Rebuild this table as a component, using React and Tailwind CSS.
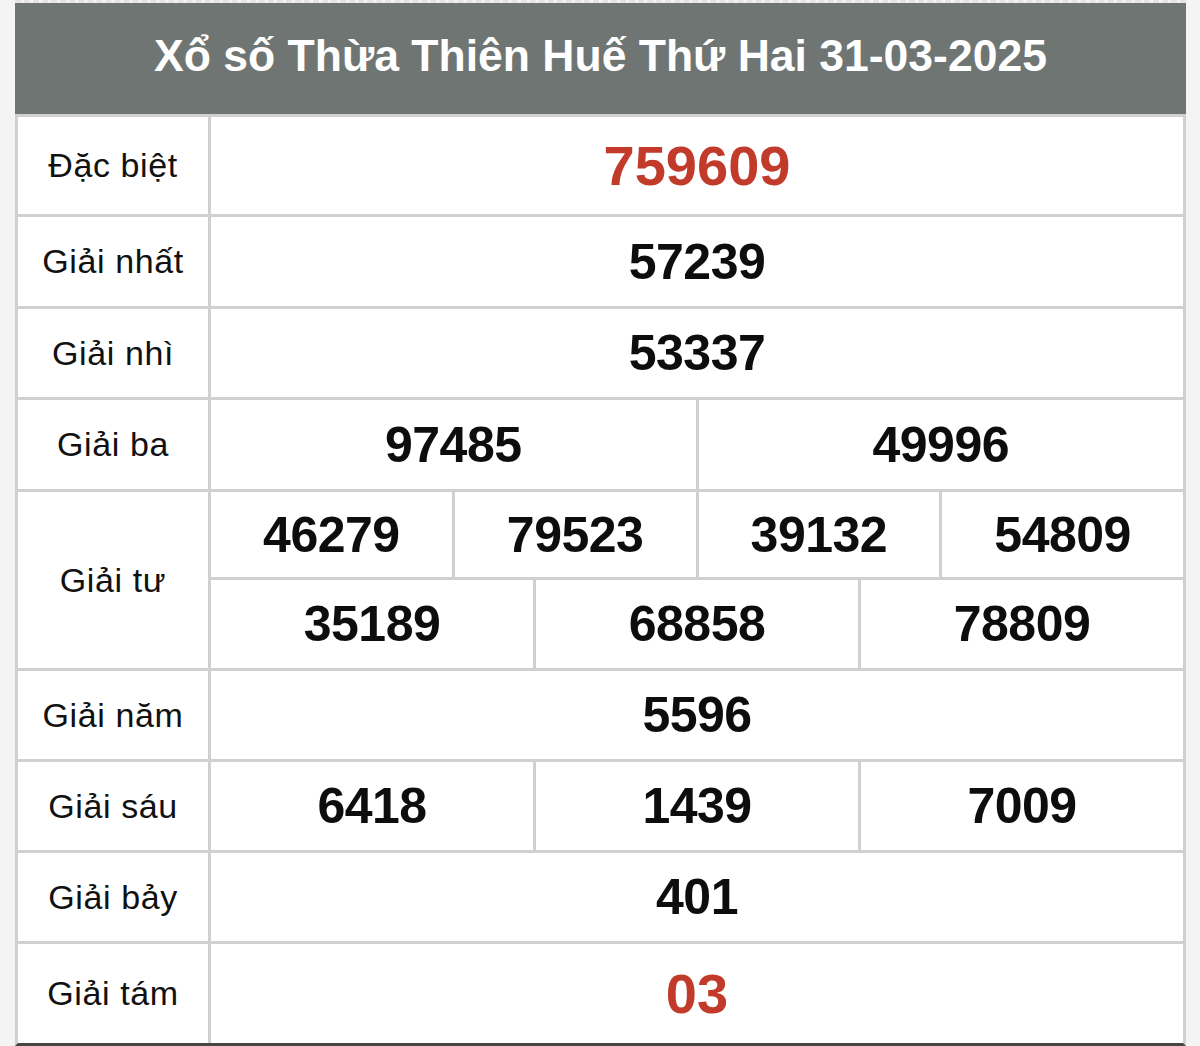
import React from 'react';

const font = { fontFamily: '"Liberation Sans", Arial, sans-serif' };

const rows = [
    { label: 'Đặc biệt', h: 'h-[97px]', lines: [['759609']], red: true },
    { label: 'Giải nhất', h: 'h-[89px]', lines: [['57239']] },
    { label: 'Giải nhì', h: 'h-[88px]', lines: [['53337']] },
    { label: 'Giải ba', h: 'h-[89px]', lines: [['97485', '49996']] },
    { label: 'Giải tư', h: 'h-[88px]', lines: [['46279', '79523', '39132', '54809'], ['35189', '68858', '78809']] },
    { label: 'Giải năm', h: 'h-[88px]', lines: [['5596']] },
    { label: 'Giải sáu', h: 'h-[88px]', lines: [['6418', '1439', '7009']] },
    { label: 'Giải bảy', h: 'h-[88px]', lines: [['401']] },
    { label: 'Giải tám', h: 'h-[99px]', lines: [['03']], red: true, last: true },
];

const PrizeRow = ({ row }) => {
    return (
        <div className={`flex ${row.last ? '' : 'border-b-[3px] border-[#d0d0d0]'}`}>
            {/* label column */}
            <div className="w-[193px] shrink-0 flex items-center justify-center border-r-[3px] border-[#d0d0d0]">
                <span className="text-[34px] tracking-[0.6px] text-[#111]">{row.label}</span>
            </div>
            <div className="flex-1 flex flex-col">
                {row.lines.map((nums, i) => (
                    <div
                        key={i}
                        className={`flex ${row.h} ${i < row.lines.length - 1 ? 'border-b-[3px] border-[#d0d0d0]' : ''}`}
                    >
                        {nums.map((n, j) => (
                            <div
                                key={j}
                                className={`flex-1 flex items-center justify-center ${j < nums.length - 1 ? 'border-r-[3px] border-[#d0d0d0]' : ''}`}
                            >
                                {row.red ? (
                                    <span className="text-[56px] font-bold text-[#c23b2a] leading-none">{n}</span>
                                ) : (
                                    <span className="text-[50px] font-bold tracking-[-0.5px] text-[#0d0d0d] leading-none">{n}</span>
                                )}
                            </div>
                        ))}
                    </div>
                ))}
            </div>
        </div>
    );
};

export default function App() {
    return (
        <div className="min-h-screen bg-[#f4f4f4] pl-[15px] pr-[14px]" style={font}>
            <div className="border-t-[3px] border-dashed border-[#e4e4e4]">
                <div className="h-[111px] bg-[#6f7573] flex items-center justify-center pb-[4px]">
                    <h1 className="text-[44.5px] font-bold text-white">Xổ số Thừa Thiên Huế Thứ Hai 31-03-2025</h1>
                </div>
                <div className="bg-white border-x-[3px] border-t-[3px] border-b-[3px] border-x-[#d0d0d0] border-t-[#d0d0d0] border-b-[#4a4541]">
                    {rows.map((r) => (
                        <PrizeRow key={r.label} row={r} />
                    ))}
                </div>
            </div>
        </div>
    );
}
